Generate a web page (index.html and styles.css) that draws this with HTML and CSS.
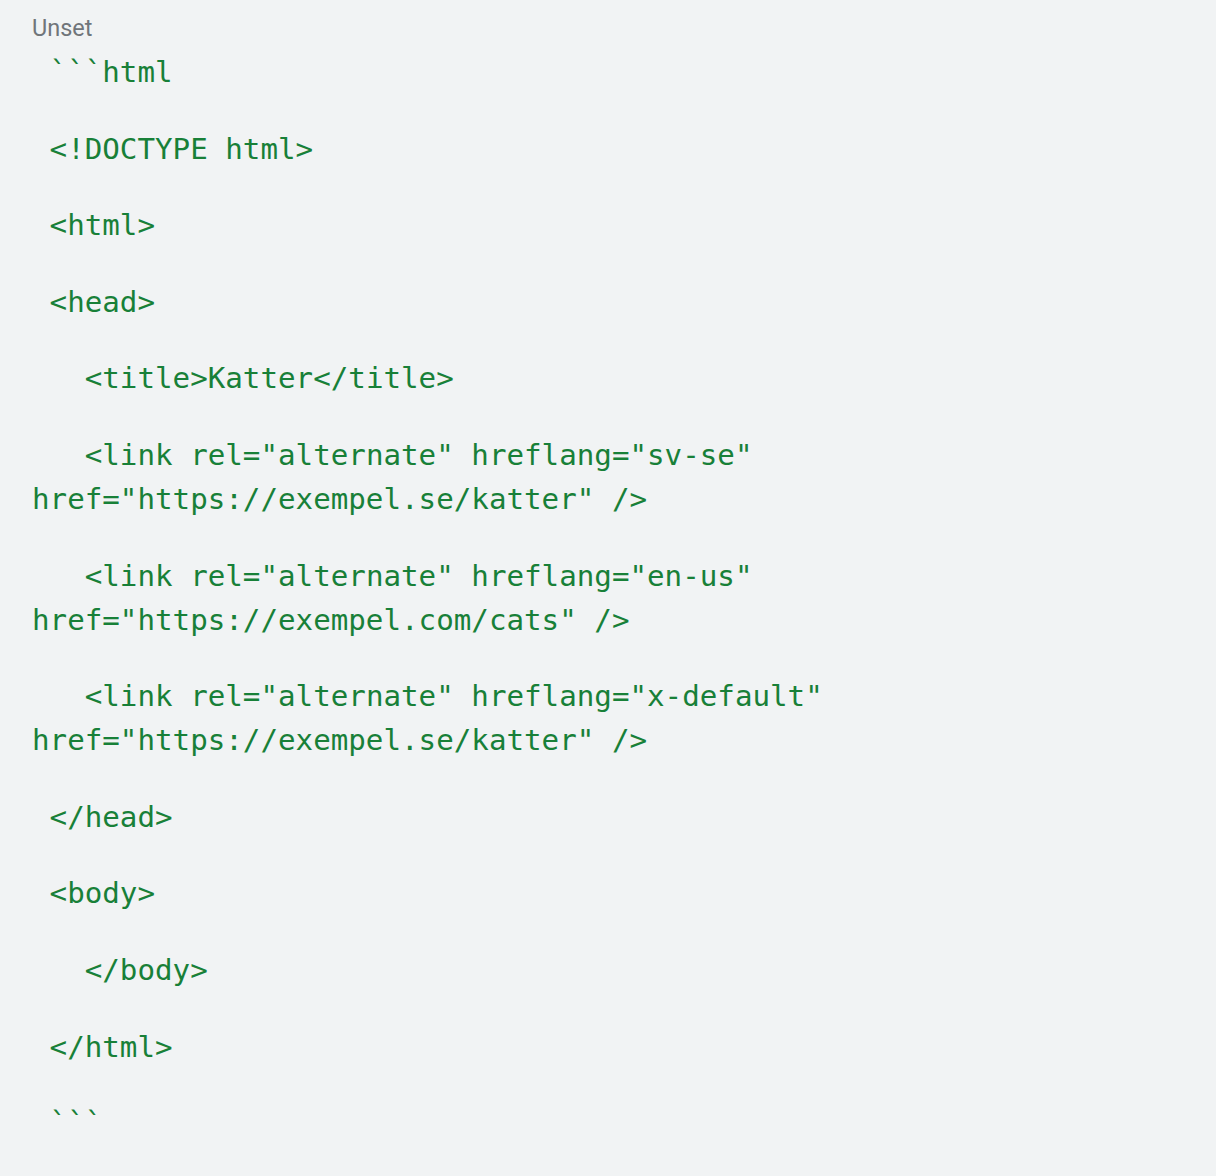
FILE: index.html
```html
<!DOCTYPE html>
<html>
<head>
<meta charset="utf-8">
<link rel="stylesheet" href="styles.css">
</head>
<body>
<div class="block">
  <div class="label">Unset</div>
  <div class="code">
    <div class="line"> ```html</div>
    <div class="line"> &lt;!DOCTYPE html&gt;</div>
    <div class="line"> &lt;html&gt;</div>
    <div class="line"> &lt;head&gt;</div>
    <div class="line">   &lt;title&gt;Katter&lt;/title&gt;</div>
    <div class="line">   &lt;link rel="alternate" hreflang="sv-se" href="https://exempel.se/katter" /&gt;</div>
    <div class="line">   &lt;link rel="alternate" hreflang="en-us" href="https://exempel.com/cats" /&gt;</div>
    <div class="line">   &lt;link rel="alternate" hreflang="x-default" href="https://exempel.se/katter" /&gt;</div>
    <div class="line"> &lt;/head&gt;</div>
    <div class="line"> &lt;body&gt;</div>
    <div class="line">   &lt;/body&gt;</div>
    <div class="line"> &lt;/html&gt;</div>
    <div class="line"> ```</div>
  </div>
</div>
</body>
</html>
```

FILE: styles.css
```css
html, body {
  margin: 0;
  padding: 0;
  background: #f1f3f4;
}
.block {
  padding: 14px 32px 0 32px;
  min-height: 1162px;
  box-sizing: border-box;
}
.label {
  font-family: Roboto, "Liberation Sans", sans-serif;
  font-size: 23.5px;
  line-height: 28px;
  color: #70757a;
  margin-bottom: 8px;
}
.code {
  font-family: "DejaVu Sans Mono", "Liberation Mono", monospace;
  font-size: 29.2px;
  line-height: 44px;
  color: #188038;
  width: 1000px;
}
.line {
  white-space: pre-wrap;
  margin-bottom: 32.6px;
}
```
